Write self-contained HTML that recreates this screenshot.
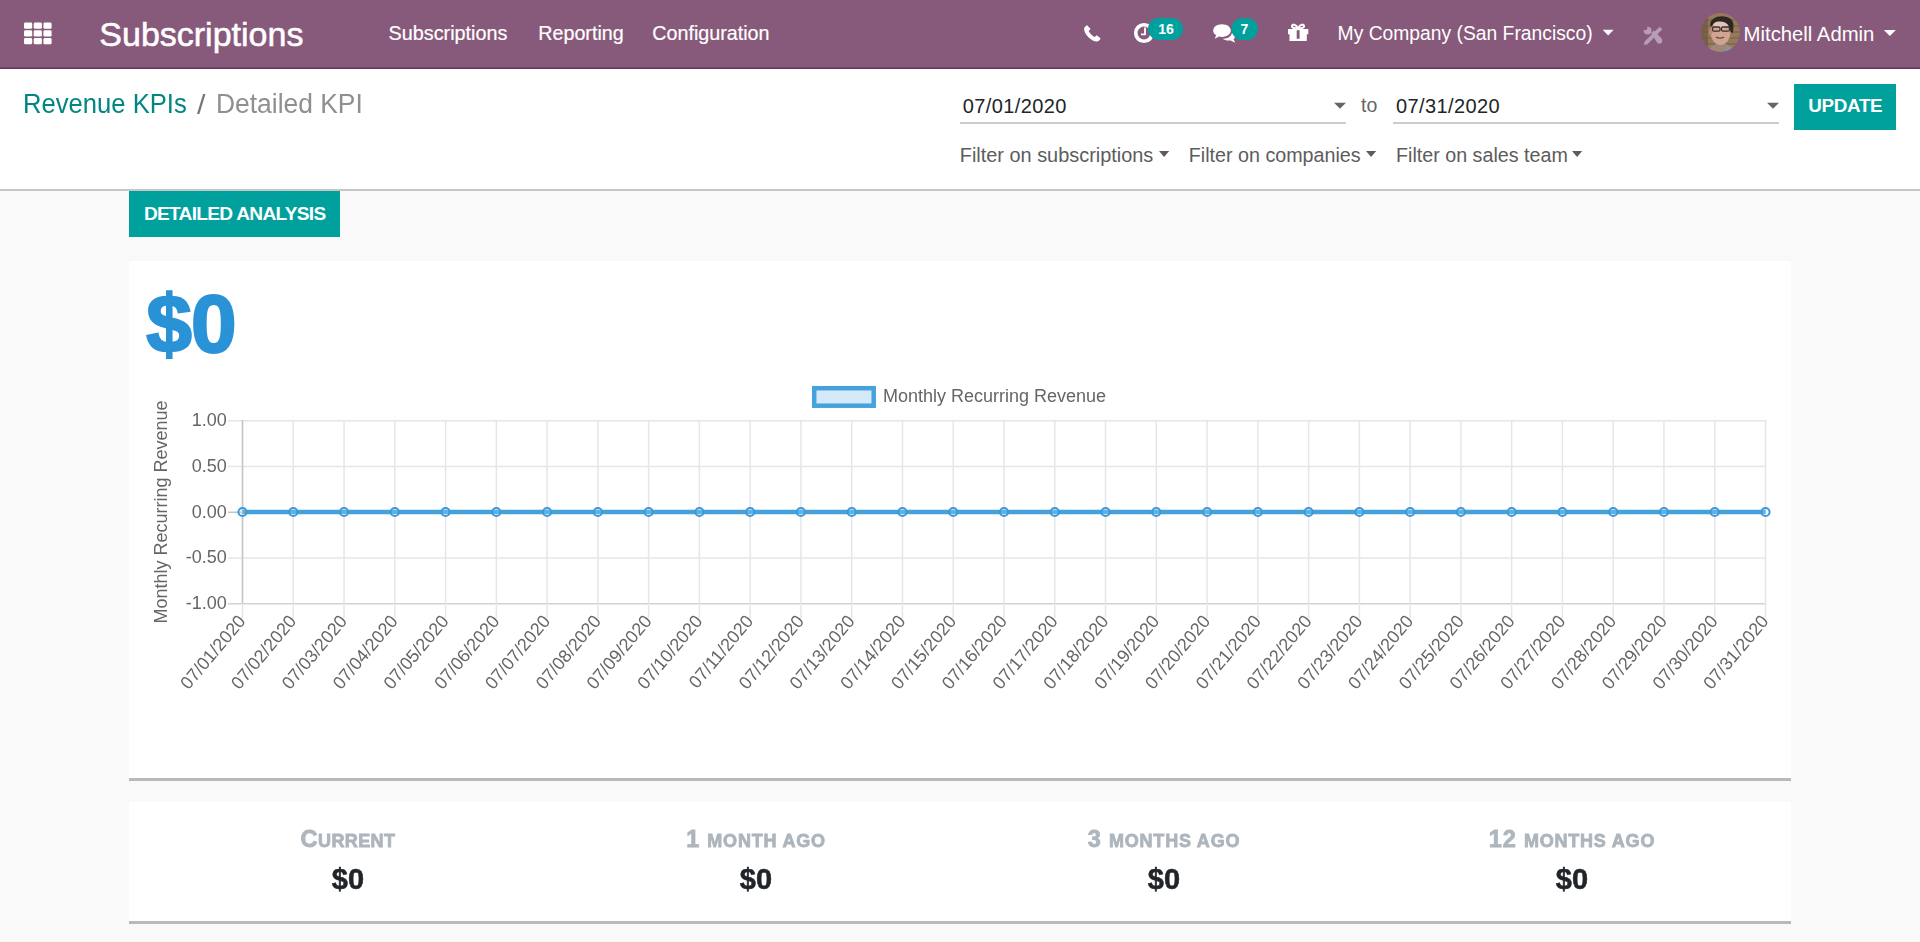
<!DOCTYPE html>
<html><head><meta charset="utf-8"><title>Subscriptions</title>
<style>
html,body{margin:0;padding:0;}
body{width:1920px;height:942px;overflow:hidden;position:relative;background:#f9f9f9;font-family:"Liberation Sans", sans-serif;}
.t{position:absolute;line-height:1;white-space:nowrap;}
.abs{position:absolute;}
</style></head><body>
<div class="abs" style="left:0;top:0;width:1920px;height:67px;background:#875A7B"></div>
<div class="abs" style="left:0;top:67px;width:1920px;height:1px;background:#6f4a66"></div>
<div class="abs" style="left:0;top:68px;width:1920px;height:1px;background:#5d3853"></div>
<svg class="abs" style="left:0;top:0" width="60" height="67"><rect x="24.00" y="22.50" width="8.2" height="6.3" rx="1.4" fill="#fff"/><rect x="33.70" y="22.50" width="8.2" height="6.3" rx="1.4" fill="#fff"/><rect x="43.40" y="22.50" width="8.2" height="6.3" rx="1.4" fill="#fff"/><rect x="24.00" y="30.25" width="8.2" height="6.3" rx="1.4" fill="#fff"/><rect x="33.70" y="30.25" width="8.2" height="6.3" rx="1.4" fill="#fff"/><rect x="43.40" y="30.25" width="8.2" height="6.3" rx="1.4" fill="#fff"/><rect x="24.00" y="38.00" width="8.2" height="6.3" rx="1.4" fill="#fff"/><rect x="33.70" y="38.00" width="8.2" height="6.3" rx="1.4" fill="#fff"/><rect x="43.40" y="38.00" width="8.2" height="6.3" rx="1.4" fill="#fff"/></svg>
<div class="t" style="left:99.30px;top:17.02px;font-size:34px;color:#fff;-webkit-text-stroke:0.55px #fff;">Subscriptions</div>
<div class="t" style="left:388.60px;top:24.24px;font-size:19.8px;color:#fff;-webkit-text-stroke:0.2px #fff;">Subscriptions</div>
<div class="t" style="left:538.30px;top:24.32px;font-size:19.7px;color:#fff;-webkit-text-stroke:0.2px #fff;">Reporting</div>
<div class="t" style="left:652.30px;top:24.32px;font-size:19.7px;color:#fff;-webkit-text-stroke:0.2px #fff;">Configuration</div>
<svg class="abs" style="left:1070px;top:0" width="260" height="67" viewBox="1070 0 260 67">
<path fill="#fff" d="M1087.2,25.2 C1086.1,25.6 1084.3,26.9 1084.1,28.6 C1083.9,30.6 1085.3,34.2 1088.4,37.3 C1091.6,40.4 1095.2,41.9 1097.2,41.5 C1098.9,41.2 1100.3,39.6 1100.6,38.6 L1096.9,35.3 L1094.7,37.1 C1092.4,36.2 1089.7,33.5 1088.6,31.1 L1090.6,29 Z"/>
<circle cx="1144" cy="33" r="8.3" fill="none" stroke="#fff" stroke-width="3.6"/>
<path d="M1145,27.5 V34.3 H1141" fill="none" stroke="#fff" stroke-width="1.8"/>
<rect x="1148" y="18" width="35" height="22" rx="11" fill="#00A09D"/>
<path fill="#fff" d="M1222,24.2 C1216.8,24.2 1213.2,27 1213.2,30.6 C1213.2,32.6 1214.3,34.2 1216.1,35.3 L1214.8,38.8 L1219.1,36.6 C1220,36.8 1221,36.9 1222,36.9 C1227.2,36.9 1230.8,34.1 1230.8,30.6 C1230.8,27 1227.2,24.2 1222,24.2 Z"/>
<path fill="#fff" d="M1231.8,33.2 C1231.2,36.6 1227.6,38.6 1222.6,38.8 C1224,40 1226.2,40.6 1228.5,40.6 C1229.3,40.6 1230,40.5 1230.7,40.4 L1235.2,42.8 L1233.6,39.2 C1234.8,38.2 1235.4,37 1235.4,35.6 C1235.4,34.7 1234.8,33.8 1233.9,33 Z"/>
<rect x="1231.4" y="18" width="26.5" height="22" rx="11" fill="#00A09D"/>
<path fill="#fff" d="M1288,29 H1308.3 V34.3 H1306.8 V41 H1289.5 V34.3 H1288 Z"/>
<rect x="1296.7" y="30.2" width="2.9" height="8.6" fill="#875A7B"/>
<path fill="none" stroke="#fff" stroke-width="2" d="M1298,28.5 C1296,24.5 1292.5,23.5 1292,26 C1291.6,28 1295,28.5 1298,28.5 C1301,28.5 1304.4,28 1304,26 C1303.5,23.5 1300,24.5 1298,28.5"/>
</svg>
<div class="t" style="left:1158.20px;top:22.15px;font-size:14px;color:#fff;font-weight:700;">16</div>
<div class="t" style="left:1240.50px;top:22.15px;font-size:14px;color:#fff;font-weight:700;">7</div>
<div class="t" style="left:1337.60px;top:24.46px;font-size:19.3px;color:#fff;">My Company (San Francisco)</div>
<svg class="abs" style="left:1600px;top:25px" width="20" height="15"><path d="M2.7,4.8 H13.6 L8.15,10.6 Z" fill="#fff"/></svg>
<svg class="abs" style="left:1636px;top:20px" width="32" height="32" viewBox="1636 20 32 32">
<g fill="#b99db5">
<path d="M1651.2,33.2 L1653.8,30.6 L1661.6,38.6 C1662.6,39.6 1662.6,41.6 1661.4,42.8 C1660.2,44 1658.4,44 1657.4,43 Z"/>
<circle cx="1647.6" cy="30.6" r="3.9"/>
<path d="M1643.8,45 L1644.65,41.46 L1659.65,26.66 L1662.35,29.34 L1647.35,44.14 Z"/>
</g>
<circle cx="1645.2" cy="28.2" r="2.1" fill="#875A7B"/>
</svg>
<svg class="abs" style="left:1700px;top:12px" width="42" height="42" viewBox="1700 12 42 42">
<defs><clipPath id="av"><circle cx="1720.4" cy="32.4" r="19.5"/></clipPath><filter id="avb" x="-10%" y="-10%" width="120%" height="120%"><feGaussianBlur stdDeviation="0.6"/></filter></defs>
<g clip-path="url(#av)"><g filter="url(#avb)">
<rect x="1698" y="10" width="46" height="46" fill="#96785a"/>
<rect x="1698" y="10" width="10" height="46" fill="#7a5f48"/>
<g stroke="#6f5540" stroke-width="1.1" opacity="0.7">
<line x1="1698" y1="20" x2="1744" y2="20"/><line x1="1698" y1="26" x2="1744" y2="26"/><line x1="1698" y1="32" x2="1744" y2="32"/>
<line x1="1698" y1="38" x2="1744" y2="38"/><line x1="1698" y1="44" x2="1744" y2="44"/></g>
<path d="M1708,56 C1708,48 1712,45 1716,44 L1726,44 C1731,46 1736,50 1738,56 Z" fill="#a08678"/>
<path d="M1723,56 L1727,45.5 C1732,47 1736,50 1738,56 Z" fill="#8595a6"/>
<ellipse cx="1720.5" cy="32.5" rx="10" ry="12.5" fill="#cfa592"/>
<ellipse cx="1721" cy="24.5" rx="7.5" ry="4" fill="#dec6ba"/>
<ellipse cx="1710.5" cy="32" rx="1.8" ry="3" fill="#b88a70"/>
<path d="M1710,25 C1710,14 1733,13 1733.5,25 L1733,33 L1730.5,32 C1730,26 1727,21.5 1720,21.5 C1715,21.5 1712.5,23.5 1712,27 Z" fill="#2f2622"/>
<g fill="none" stroke="#3d2e28" stroke-width="1.3"><rect x="1712.5" y="27" width="7.5" height="4.2" rx="1.5"/><rect x="1721.5" y="27" width="8" height="4.2" rx="1.5"/></g>
<path d="M1716,37 C1718,38.6 1722,38.6 1724,37" stroke="#6a4638" stroke-width="1.2" fill="none"/>
</g></g></svg>
<div class="t" style="left:1743.60px;top:23.62px;font-size:20.3px;color:#fff;">Mitchell Admin</div>
<svg class="abs" style="left:1880px;top:25px" width="20" height="15"><path d="M3.8,5 H15.9 L9.85,11 Z" fill="#fff"/></svg>
<div class="abs" style="left:0;top:69px;width:1920px;height:120px;background:#fff;border-bottom:2px solid #c6c6c6"></div>
<div class="t" style="left:23.00px;top:89.65px;font-size:27.7px;color:#008784;transform:scaleX(0.925);transform-origin:0 0;">Revenue KPIs</div>
<div class="t" style="left:197.30px;top:90.75px;font-size:27.7px;color:#777;transform:scaleX(1.1);transform-origin:0 0;">/</div>
<div class="t" style="left:216.00px;top:89.65px;font-size:27.7px;color:#8f8f8f;transform:scaleX(0.954);transform-origin:0 0;">Detailed KPI</div>
<div class="abs" style="left:960px;top:122px;width:386px;height:2px;background:#cccccc"></div>
<div class="abs" style="left:1393px;top:122px;width:386px;height:2px;background:#cccccc"></div>
<div class="t" style="left:962.80px;top:95.97px;font-size:20px;color:#212529;letter-spacing:0.4px;">07/01/2020</div>
<div class="t" style="left:1395.90px;top:95.97px;font-size:20px;color:#212529;letter-spacing:0.4px;">07/31/2020</div>
<svg class="abs" style="left:1330px;top:100px" width="20" height="12"><path d="M4,2.8 H16 L10,8.8 Z" fill="#666"/></svg>
<svg class="abs" style="left:1763px;top:100px" width="20" height="12"><path d="M4,2.8 H16 L10,8.8 Z" fill="#666"/></svg>
<div class="t" style="left:1361.00px;top:96.29px;font-size:19.5px;color:#666;">to</div>
<div class="abs" style="left:1794px;top:84px;width:102px;height:46px;background:#00A09D"></div>
<div class="t" style="left:1808.30px;top:96.99px;font-size:18.8px;color:#fff;font-weight:700;letter-spacing:-0.3px;">UPDATE</div>
<div class="t" style="left:959.80px;top:145.55px;font-size:19.9px;color:#5c5c5c;">Filter on subscriptions</div>
<div class="t" style="left:1188.80px;top:145.72px;font-size:19.7px;color:#5c5c5c;">Filter on companies</div>
<div class="t" style="left:1396.00px;top:145.72px;font-size:19.7px;color:#5c5c5c;">Filter on sales team</div>
<svg class="abs" style="left:1157.2px;top:148px" width="16" height="12"><path d="M2,3 H12.2 L7.1,8.9 Z" fill="#5c5c5c"/></svg>
<svg class="abs" style="left:1364.0px;top:148px" width="16" height="12"><path d="M2,3 H12.2 L7.1,8.9 Z" fill="#5c5c5c"/></svg>
<svg class="abs" style="left:1569.8px;top:148px" width="16" height="12"><path d="M2,3 H12.2 L7.1,8.9 Z" fill="#5c5c5c"/></svg>
<div class="abs" style="left:129px;top:191px;width:211px;height:46px;background:#00A09D"></div>
<div class="t" style="left:143.90px;top:204.23px;font-size:19.1px;color:#fff;font-weight:700;letter-spacing:-0.7px;">DETAILED ANALYSIS</div>
<div class="abs" style="left:129px;top:261px;width:1662px;height:517px;background:#fff;border-bottom:3px solid #b9b9b9"></div>
<div class="t" style="left:146.30px;top:282.79px;font-size:82px;color:#2a92d6;font-weight:700;letter-spacing:-0.8px;-webkit-text-stroke:2.2px #2a92d6;">$0</div>
<div class="abs" style="left:129px;top:802px;width:1662px;height:119px;background:#fff;border-bottom:3px solid #b9b9b9"></div>
<svg class="abs" style="left:0;top:0;will-change:transform" width="1920" height="942" viewBox="0 0 1920 942">
<line x1="228" y1="420.80" x2="1766.25" y2="420.80" stroke="#e6e6e6" stroke-width="1.5"/>
<text x="226.7" y="426.20" text-anchor="end" font-family="Liberation Sans" font-size="18" fill="#666">1.00</text>
<line x1="228" y1="466.53" x2="1766.25" y2="466.53" stroke="#e6e6e6" stroke-width="1.5"/>
<text x="226.7" y="471.93" text-anchor="end" font-family="Liberation Sans" font-size="18" fill="#666">0.50</text>
<line x1="228" y1="512.25" x2="1766.25" y2="512.25" stroke="#c4c4c4" stroke-width="1.5"/>
<text x="226.7" y="517.65" text-anchor="end" font-family="Liberation Sans" font-size="18" fill="#666">0.00</text>
<line x1="228" y1="557.98" x2="1766.25" y2="557.98" stroke="#e6e6e6" stroke-width="1.5"/>
<text x="226.7" y="563.38" text-anchor="end" font-family="Liberation Sans" font-size="18" fill="#666">-0.50</text>
<line x1="228" y1="603.70" x2="1766.25" y2="603.70" stroke="#d2d2d2" stroke-width="1.5"/>
<text x="226.7" y="609.10" text-anchor="end" font-family="Liberation Sans" font-size="18" fill="#666">-1.00</text>
<line x1="242.50" y1="420.05" x2="242.50" y2="618" stroke="#e6e6e6" stroke-width="1.5"/>
<line x1="242.50" y1="420.05" x2="242.50" y2="603.70" stroke="#c4c4c4" stroke-width="1.5"/>
<text transform="translate(246.50,621.5) rotate(-50)" text-anchor="end" font-family="Liberation Sans" font-size="18" fill="#666">07/01/2020</text>
<line x1="293.27" y1="420.05" x2="293.27" y2="618" stroke="#e6e6e6" stroke-width="1.5"/>
<text transform="translate(297.27,621.5) rotate(-50)" text-anchor="end" font-family="Liberation Sans" font-size="18" fill="#666">07/02/2020</text>
<line x1="344.03" y1="420.05" x2="344.03" y2="618" stroke="#e6e6e6" stroke-width="1.5"/>
<text transform="translate(348.03,621.5) rotate(-50)" text-anchor="end" font-family="Liberation Sans" font-size="18" fill="#666">07/03/2020</text>
<line x1="394.80" y1="420.05" x2="394.80" y2="618" stroke="#e6e6e6" stroke-width="1.5"/>
<text transform="translate(398.80,621.5) rotate(-50)" text-anchor="end" font-family="Liberation Sans" font-size="18" fill="#666">07/04/2020</text>
<line x1="445.57" y1="420.05" x2="445.57" y2="618" stroke="#e6e6e6" stroke-width="1.5"/>
<text transform="translate(449.57,621.5) rotate(-50)" text-anchor="end" font-family="Liberation Sans" font-size="18" fill="#666">07/05/2020</text>
<line x1="496.33" y1="420.05" x2="496.33" y2="618" stroke="#e6e6e6" stroke-width="1.5"/>
<text transform="translate(500.33,621.5) rotate(-50)" text-anchor="end" font-family="Liberation Sans" font-size="18" fill="#666">07/06/2020</text>
<line x1="547.10" y1="420.05" x2="547.10" y2="618" stroke="#e6e6e6" stroke-width="1.5"/>
<text transform="translate(551.10,621.5) rotate(-50)" text-anchor="end" font-family="Liberation Sans" font-size="18" fill="#666">07/07/2020</text>
<line x1="597.87" y1="420.05" x2="597.87" y2="618" stroke="#e6e6e6" stroke-width="1.5"/>
<text transform="translate(601.87,621.5) rotate(-50)" text-anchor="end" font-family="Liberation Sans" font-size="18" fill="#666">07/08/2020</text>
<line x1="648.63" y1="420.05" x2="648.63" y2="618" stroke="#e6e6e6" stroke-width="1.5"/>
<text transform="translate(652.63,621.5) rotate(-50)" text-anchor="end" font-family="Liberation Sans" font-size="18" fill="#666">07/09/2020</text>
<line x1="699.40" y1="420.05" x2="699.40" y2="618" stroke="#e6e6e6" stroke-width="1.5"/>
<text transform="translate(703.40,621.5) rotate(-50)" text-anchor="end" font-family="Liberation Sans" font-size="18" fill="#666">07/10/2020</text>
<line x1="750.17" y1="420.05" x2="750.17" y2="618" stroke="#e6e6e6" stroke-width="1.5"/>
<text transform="translate(754.17,621.5) rotate(-50)" text-anchor="end" font-family="Liberation Sans" font-size="18" fill="#666">07/11/2020</text>
<line x1="800.93" y1="420.05" x2="800.93" y2="618" stroke="#e6e6e6" stroke-width="1.5"/>
<text transform="translate(804.93,621.5) rotate(-50)" text-anchor="end" font-family="Liberation Sans" font-size="18" fill="#666">07/12/2020</text>
<line x1="851.70" y1="420.05" x2="851.70" y2="618" stroke="#e6e6e6" stroke-width="1.5"/>
<text transform="translate(855.70,621.5) rotate(-50)" text-anchor="end" font-family="Liberation Sans" font-size="18" fill="#666">07/13/2020</text>
<line x1="902.47" y1="420.05" x2="902.47" y2="618" stroke="#e6e6e6" stroke-width="1.5"/>
<text transform="translate(906.47,621.5) rotate(-50)" text-anchor="end" font-family="Liberation Sans" font-size="18" fill="#666">07/14/2020</text>
<line x1="953.23" y1="420.05" x2="953.23" y2="618" stroke="#e6e6e6" stroke-width="1.5"/>
<text transform="translate(957.23,621.5) rotate(-50)" text-anchor="end" font-family="Liberation Sans" font-size="18" fill="#666">07/15/2020</text>
<line x1="1004.00" y1="420.05" x2="1004.00" y2="618" stroke="#e6e6e6" stroke-width="1.5"/>
<text transform="translate(1008.00,621.5) rotate(-50)" text-anchor="end" font-family="Liberation Sans" font-size="18" fill="#666">07/16/2020</text>
<line x1="1054.77" y1="420.05" x2="1054.77" y2="618" stroke="#e6e6e6" stroke-width="1.5"/>
<text transform="translate(1058.77,621.5) rotate(-50)" text-anchor="end" font-family="Liberation Sans" font-size="18" fill="#666">07/17/2020</text>
<line x1="1105.53" y1="420.05" x2="1105.53" y2="618" stroke="#e6e6e6" stroke-width="1.5"/>
<text transform="translate(1109.53,621.5) rotate(-50)" text-anchor="end" font-family="Liberation Sans" font-size="18" fill="#666">07/18/2020</text>
<line x1="1156.30" y1="420.05" x2="1156.30" y2="618" stroke="#e6e6e6" stroke-width="1.5"/>
<text transform="translate(1160.30,621.5) rotate(-50)" text-anchor="end" font-family="Liberation Sans" font-size="18" fill="#666">07/19/2020</text>
<line x1="1207.07" y1="420.05" x2="1207.07" y2="618" stroke="#e6e6e6" stroke-width="1.5"/>
<text transform="translate(1211.07,621.5) rotate(-50)" text-anchor="end" font-family="Liberation Sans" font-size="18" fill="#666">07/20/2020</text>
<line x1="1257.83" y1="420.05" x2="1257.83" y2="618" stroke="#e6e6e6" stroke-width="1.5"/>
<text transform="translate(1261.83,621.5) rotate(-50)" text-anchor="end" font-family="Liberation Sans" font-size="18" fill="#666">07/21/2020</text>
<line x1="1308.60" y1="420.05" x2="1308.60" y2="618" stroke="#e6e6e6" stroke-width="1.5"/>
<text transform="translate(1312.60,621.5) rotate(-50)" text-anchor="end" font-family="Liberation Sans" font-size="18" fill="#666">07/22/2020</text>
<line x1="1359.37" y1="420.05" x2="1359.37" y2="618" stroke="#e6e6e6" stroke-width="1.5"/>
<text transform="translate(1363.37,621.5) rotate(-50)" text-anchor="end" font-family="Liberation Sans" font-size="18" fill="#666">07/23/2020</text>
<line x1="1410.13" y1="420.05" x2="1410.13" y2="618" stroke="#e6e6e6" stroke-width="1.5"/>
<text transform="translate(1414.13,621.5) rotate(-50)" text-anchor="end" font-family="Liberation Sans" font-size="18" fill="#666">07/24/2020</text>
<line x1="1460.90" y1="420.05" x2="1460.90" y2="618" stroke="#e6e6e6" stroke-width="1.5"/>
<text transform="translate(1464.90,621.5) rotate(-50)" text-anchor="end" font-family="Liberation Sans" font-size="18" fill="#666">07/25/2020</text>
<line x1="1511.67" y1="420.05" x2="1511.67" y2="618" stroke="#e6e6e6" stroke-width="1.5"/>
<text transform="translate(1515.67,621.5) rotate(-50)" text-anchor="end" font-family="Liberation Sans" font-size="18" fill="#666">07/26/2020</text>
<line x1="1562.43" y1="420.05" x2="1562.43" y2="618" stroke="#e6e6e6" stroke-width="1.5"/>
<text transform="translate(1566.43,621.5) rotate(-50)" text-anchor="end" font-family="Liberation Sans" font-size="18" fill="#666">07/27/2020</text>
<line x1="1613.20" y1="420.05" x2="1613.20" y2="618" stroke="#e6e6e6" stroke-width="1.5"/>
<text transform="translate(1617.20,621.5) rotate(-50)" text-anchor="end" font-family="Liberation Sans" font-size="18" fill="#666">07/28/2020</text>
<line x1="1663.97" y1="420.05" x2="1663.97" y2="618" stroke="#e6e6e6" stroke-width="1.5"/>
<text transform="translate(1667.97,621.5) rotate(-50)" text-anchor="end" font-family="Liberation Sans" font-size="18" fill="#666">07/29/2020</text>
<line x1="1714.73" y1="420.05" x2="1714.73" y2="618" stroke="#e6e6e6" stroke-width="1.5"/>
<text transform="translate(1718.73,621.5) rotate(-50)" text-anchor="end" font-family="Liberation Sans" font-size="18" fill="#666">07/30/2020</text>
<line x1="1765.50" y1="420.05" x2="1765.50" y2="618" stroke="#e6e6e6" stroke-width="1.5"/>
<text transform="translate(1769.50,621.5) rotate(-50)" text-anchor="end" font-family="Liberation Sans" font-size="18" fill="#666">07/31/2020</text>
<text transform="translate(166.5,512) rotate(-90)" text-anchor="middle" font-family="Liberation Sans" font-size="18" fill="#666">Monthly Recurring Revenue</text>
<line x1="242.50" y1="512" x2="1765.50" y2="512" stroke="#45a1dc" stroke-width="4.5"/>
<circle cx="242.50" cy="512" r="4.1" fill="rgba(214,233,248,0.2)" stroke="#3a9ad9" stroke-width="2"/>
<circle cx="293.27" cy="512" r="4.1" fill="rgba(214,233,248,0.2)" stroke="#3a9ad9" stroke-width="2"/>
<circle cx="344.03" cy="512" r="4.1" fill="rgba(214,233,248,0.2)" stroke="#3a9ad9" stroke-width="2"/>
<circle cx="394.80" cy="512" r="4.1" fill="rgba(214,233,248,0.2)" stroke="#3a9ad9" stroke-width="2"/>
<circle cx="445.57" cy="512" r="4.1" fill="rgba(214,233,248,0.2)" stroke="#3a9ad9" stroke-width="2"/>
<circle cx="496.33" cy="512" r="4.1" fill="rgba(214,233,248,0.2)" stroke="#3a9ad9" stroke-width="2"/>
<circle cx="547.10" cy="512" r="4.1" fill="rgba(214,233,248,0.2)" stroke="#3a9ad9" stroke-width="2"/>
<circle cx="597.87" cy="512" r="4.1" fill="rgba(214,233,248,0.2)" stroke="#3a9ad9" stroke-width="2"/>
<circle cx="648.63" cy="512" r="4.1" fill="rgba(214,233,248,0.2)" stroke="#3a9ad9" stroke-width="2"/>
<circle cx="699.40" cy="512" r="4.1" fill="rgba(214,233,248,0.2)" stroke="#3a9ad9" stroke-width="2"/>
<circle cx="750.17" cy="512" r="4.1" fill="rgba(214,233,248,0.2)" stroke="#3a9ad9" stroke-width="2"/>
<circle cx="800.93" cy="512" r="4.1" fill="rgba(214,233,248,0.2)" stroke="#3a9ad9" stroke-width="2"/>
<circle cx="851.70" cy="512" r="4.1" fill="rgba(214,233,248,0.2)" stroke="#3a9ad9" stroke-width="2"/>
<circle cx="902.47" cy="512" r="4.1" fill="rgba(214,233,248,0.2)" stroke="#3a9ad9" stroke-width="2"/>
<circle cx="953.23" cy="512" r="4.1" fill="rgba(214,233,248,0.2)" stroke="#3a9ad9" stroke-width="2"/>
<circle cx="1004.00" cy="512" r="4.1" fill="rgba(214,233,248,0.2)" stroke="#3a9ad9" stroke-width="2"/>
<circle cx="1054.77" cy="512" r="4.1" fill="rgba(214,233,248,0.2)" stroke="#3a9ad9" stroke-width="2"/>
<circle cx="1105.53" cy="512" r="4.1" fill="rgba(214,233,248,0.2)" stroke="#3a9ad9" stroke-width="2"/>
<circle cx="1156.30" cy="512" r="4.1" fill="rgba(214,233,248,0.2)" stroke="#3a9ad9" stroke-width="2"/>
<circle cx="1207.07" cy="512" r="4.1" fill="rgba(214,233,248,0.2)" stroke="#3a9ad9" stroke-width="2"/>
<circle cx="1257.83" cy="512" r="4.1" fill="rgba(214,233,248,0.2)" stroke="#3a9ad9" stroke-width="2"/>
<circle cx="1308.60" cy="512" r="4.1" fill="rgba(214,233,248,0.2)" stroke="#3a9ad9" stroke-width="2"/>
<circle cx="1359.37" cy="512" r="4.1" fill="rgba(214,233,248,0.2)" stroke="#3a9ad9" stroke-width="2"/>
<circle cx="1410.13" cy="512" r="4.1" fill="rgba(214,233,248,0.2)" stroke="#3a9ad9" stroke-width="2"/>
<circle cx="1460.90" cy="512" r="4.1" fill="rgba(214,233,248,0.2)" stroke="#3a9ad9" stroke-width="2"/>
<circle cx="1511.67" cy="512" r="4.1" fill="rgba(214,233,248,0.2)" stroke="#3a9ad9" stroke-width="2"/>
<circle cx="1562.43" cy="512" r="4.1" fill="rgba(214,233,248,0.2)" stroke="#3a9ad9" stroke-width="2"/>
<circle cx="1613.20" cy="512" r="4.1" fill="rgba(214,233,248,0.2)" stroke="#3a9ad9" stroke-width="2"/>
<circle cx="1663.97" cy="512" r="4.1" fill="rgba(214,233,248,0.2)" stroke="#3a9ad9" stroke-width="2"/>
<circle cx="1714.73" cy="512" r="4.1" fill="rgba(214,233,248,0.2)" stroke="#3a9ad9" stroke-width="2"/>
<circle cx="1765.50" cy="512" r="4.1" fill="rgba(214,233,248,0.2)" stroke="#3a9ad9" stroke-width="2"/>
<rect x="814.2" y="388.2" width="59.5" height="17.5" fill="#d6e9f8" stroke="#45a2dc" stroke-width="4.5"/>
<text x="883" y="402" font-family="Liberation Sans" font-size="18" fill="#666">Monthly Recurring Revenue</text>
</svg>
<div class="t" style="left:148px;width:400px;text-align:center;top:827.91px;font-size:23.5px;font-weight:700;color:#adb5bd;letter-spacing:0.4px;-webkit-text-stroke:0.8px #adb5bd"><span style="font-size:23.5px">C</span><span style="font-size:18px">URRENT</span></div>
<div class="t" style="left:556px;width:400px;text-align:center;top:827.91px;font-size:23.5px;font-weight:700;color:#adb5bd;letter-spacing:0.8px;-webkit-text-stroke:0.8px #adb5bd"><span style="font-size:23.5px">1 </span><span style="font-size:18px">MONTH AGO</span></div>
<div class="t" style="left:964px;width:400px;text-align:center;top:827.91px;font-size:23.5px;font-weight:700;color:#adb5bd;letter-spacing:0.8px;-webkit-text-stroke:0.8px #adb5bd"><span style="font-size:23.5px">3 </span><span style="font-size:18px">MONTHS AGO</span></div>
<div class="t" style="left:1372px;width:400px;text-align:center;top:827.91px;font-size:23.5px;font-weight:700;color:#adb5bd;letter-spacing:0.8px;-webkit-text-stroke:0.8px #adb5bd"><span style="font-size:23.5px">12 </span><span style="font-size:18px">MONTHS AGO</span></div>
<div class="t" style="left:148px;width:400px;text-align:center;top:865.25px;font-size:29px;font-weight:700;color:#212529;-webkit-text-stroke:0.5px #212529">$0</div>
<div class="t" style="left:556px;width:400px;text-align:center;top:865.25px;font-size:29px;font-weight:700;color:#212529;-webkit-text-stroke:0.5px #212529">$0</div>
<div class="t" style="left:964px;width:400px;text-align:center;top:865.25px;font-size:29px;font-weight:700;color:#212529;-webkit-text-stroke:0.5px #212529">$0</div>
<div class="t" style="left:1372px;width:400px;text-align:center;top:865.25px;font-size:29px;font-weight:700;color:#212529;-webkit-text-stroke:0.5px #212529">$0</div>
</body></html>
